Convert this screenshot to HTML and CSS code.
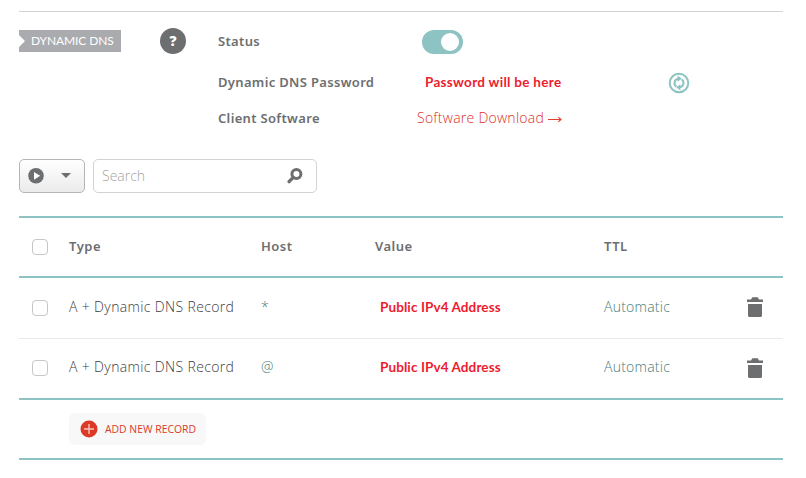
FILE: index.html
```html
<!DOCTYPE html>
<html lang="en">
<head>
<meta charset="utf-8">
<title>Dynamic DNS</title>
<link rel="stylesheet" href="styles.css">
</head>
<body>
<main class="page">
  <section class="ddns">
    <div class="tag">DYNAMIC DNS</div>
    <div class="help">?</div>
    <div class="settings">
      <div class="setting setting-status"><span class="label">Status</span><span class="toggle"><span class="knob"></span></span></div>
      <div class="setting setting-password"><span class="label">Dynamic DNS Password</span><span class="note note-password">Password will be here</span>
        <svg class="refresh" width="22" height="22" viewBox="0 0 22 22"><circle cx="11" cy="11" r="9.3" fill="none" stroke="#8dc3c2" stroke-width="2"/><g fill="none" stroke="#8dc3c2" stroke-width="2"><path d="M8.3 14.6A4.4 4.4 0 0 1 10.2 6.7"/><path d="M13.7 7.4A4.4 4.4 0 0 1 11.8 15.3"/></g><path fill="#8dc3c2" d="M9.6 3.6 13.8 6.7 9.6 9.8zM12.4 12.2v6.2L8.2 15.3z"/></svg></div>
      <div class="setting setting-client"><span class="label">Client Software</span><a class="download"><span>Software Download</span><svg width="14" height="8" viewBox="0 0 14 8"><path d="M0 4.5h13M10.3 2.2 13 4.5 10.3 6.8" fill="none" stroke="#e2402f" stroke-width="1.1"/></svg></a></div>
    </div>
  </section>
  <section class="toolbar">
    <div class="action"><svg width="50" height="18" viewBox="0 0 50 18"><circle cx="8" cy="8.8" r="7.8" fill="#6d6e70"/><path fill="#fff" d="M6 4.9 12.2 8.8 6 12.7z"/><path fill="#6d6e70" d="M33 6h10L38 11z"/></svg></div>
    <div class="search"><span>Search</span><svg width="16" height="16" viewBox="0 0 16 16"><circle cx="9.4" cy="6" r="4.5" fill="none" stroke="#6d6e70" stroke-width="3"/><path d="M6 9.6 2.1 13.6" stroke="#6d6e70" stroke-width="3.4" stroke-linecap="round"/></svg></div>
  </section>
  <section class="records">
    <div class="row head"><span class="check"></span><span class="cell">Type</span><span class="cell">Host</span><span class="cell">Value</span><span class="cell">TTL</span></div>
    <div class="row first"><span class="check"></span><span class="type">A + Dynamic DNS Record</span><span class="teal">*</span><span class="note note-value">Public IPv4 Address</span><span class="teal auto">Automatic</span><svg class="trash" width="16" height="20" viewBox="0 0 16 20"><path fill="#6d6e70" d="M0 2.5h4L5.3.3h5.4L12 2.5h4V5H0zM1 7h14v11.5Q15 20 13.5 20h-11Q1 20 1 18.5z"/></svg></div>
    <div class="row second"><span class="check"></span><span class="type">A + Dynamic DNS Record</span><span class="teal">@</span><span class="note note-value">Public IPv4 Address</span><span class="teal auto">Automatic</span><svg class="trash" width="16" height="20" viewBox="0 0 16 20"><path fill="#6d6e70" d="M0 2.5h4L5.3.3h5.4L12 2.5h4V5H0zM1 7h14v11.5Q15 20 13.5 20h-11Q1 20 1 18.5z"/></svg></div>
    <div class="footer"><div class="add"><svg width="18" height="18" viewBox="0 0 18 18"><circle cx="9" cy="9" r="8.5" fill="#dc3a27"/><path d="M9 4v10M4 9h10" stroke="#f6c3bb" stroke-width="1.4"/></svg><span>ADD NEW RECORD</span></div></div>
  </section>
</main>
</body>
</html>
```

FILE: styles.css
```css
* { box-sizing: border-box; }
body { margin: 0; background: #fff; color: #3c3c3e; font: 300 14px/20px "Open Sans", sans-serif; white-space: nowrap; }
.page { width: 764px; margin-left: 19px; padding-top: 11px; }
.ddns { display: grid; grid-template-columns: 141px 58px 1fr; align-items: start; height: 148px; border-top: 1px solid #d2d3d4; padding-top: 16px; }
.tag { width: 102px; height: 22px; margin-top: 2px; padding-left: 12px; background: #a9abae; color: #fff; font: 400 12px/22px Lato, sans-serif; letter-spacing: -0.1px; clip-path: polygon(0 0, 100% 0, 100% 100%, 0 100%, 0 17px, 6px 11px, 0 5px); }
.help { width: 26px; height: 26px; border-radius: 50%; background: #6d6e70; color: #fff; font: 800 14px/26px "Open Sans", sans-serif; text-align: center; }
.setting { display: flex; align-items: center; }
.setting-status { height: 28px; }
.setting-password { height: 54px; }
.setting-client { height: 18px; }
.label { width: 199px; }
.label, .head { color: #6d6e70; font-family: "Noto Sans", sans-serif; font-weight: 600; font-size: 13px; letter-spacing: 0.33px; }
.label, .cell, .type, .teal, .search span, .download span { padding-bottom: 2px; }
.head { letter-spacing: 0.5px; }
.toggle { display: flex; align-items: center; justify-content: flex-end; width: 41px; height: 24px; margin-left: 5px; padding-right: 4px; border-radius: 12px; background: #8dc3c2; }
.knob { width: 18px; height: 18px; border-radius: 50%; background: #fff; }
.note { padding-bottom: 3px; color: #ed1c2e; font-family: Lato, sans-serif; font-weight: 700; font-size: 13.5px; letter-spacing: 0.1px; }
.note-password { width: 244px; padding-left: 8px; margin-right: 7px; letter-spacing: 0.3px; }
.download { display: flex; align-items: center; gap: 4px; color: #de301e; letter-spacing: 0.26px; }
.toolbar { display: flex; gap: 8px; height: 57px; }
.action { display: flex; align-items: center; width: 66px; height: 34px; padding-left: 8px; border: 1px solid #b4b5b7; border-radius: 5px; background: linear-gradient(#fff, #ebebeb); }
.search { display: flex; align-items: center; justify-content: space-between; width: 224px; height: 34px; padding: 0 13px 0 8px; border: 1px solid #d2d3d4; border-radius: 5px; color: #a4a4a6; }
.search span { padding-bottom: 1px; }
.records { border-top: 2px solid #8dc3c2; border-bottom: 2px solid #8dc3c2; }
.row { display: grid; grid-template-columns: 37px 192px 114px 229px 143px 16px; align-items: center; padding-left: 13px; }
.head { height: 60px; border-bottom: 2px solid #8dc3c2; }
.first { height: 61px; border-bottom: 1px solid #e8e9ea; }
.second { height: 61px; border-bottom: 2px solid #8dc3c2; }
.check { width: 16px; height: 16px; border: 1px solid #c5c6c8; border-radius: 4px; }
.type { letter-spacing: 0.36px; }
.first .trash { margin-bottom: 2px; }
.second .check, .second .trash { margin-bottom: 1px; }
.second .teal, .second .type { padding-bottom: 3px; }
.teal { color: #457c7b; }
.auto { letter-spacing: 0.25px; }
.note-value { padding-left: 5px; }
.footer { height: 58px; padding: 13px 0 0 50px; }
.add { display: flex; align-items: center; gap: 7px; width: 137px; height: 32px; padding-left: 11px; border-radius: 6px; background: #f8f8f8; color: #dc3a27; font: 500 10.4px/16px "Open Sans", sans-serif; }
```
